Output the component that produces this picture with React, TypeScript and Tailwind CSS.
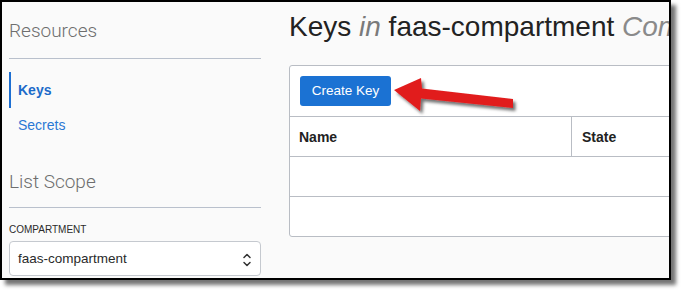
import React from "react";

export default function App() {
  const font = { fontFamily: '"Liberation Sans", Arial, sans-serif' };
  return (
    <div className="relative w-[681px] h-[290px] bg-white" style={font}>
      <div className="w-[671px] h-[280px] border-2 border-black bg-[#fafafa] overflow-hidden flex shadow-[5px_5px_4px_rgba(0,0,0,0.55)]">
        {/* Sidebar */}
        <div className="w-[252px] ml-[7px] shrink-0 flex flex-col">
          <div className="mt-[17px] h-[24px] leading-[24px] text-[19px] text-[#6e6e6e] font-light" style={{ fontFamily: 'Roboto, "Liberation Sans", sans-serif' }}>
            Resources
          </div>
          <div className="mt-[15px] border-t border-[#b9c0cc]" />
          <div className="mt-[13px] flex flex-col">
            <div className="h-[36px] flex items-center border-l-2 border-[#1d6fd2] pl-[7px] pt-[1px] text-[14px] font-bold text-[#1c6bc9]">
              Keys
            </div>
            <div className="h-[34px] flex items-center pl-[9px] text-[14px] text-[#2a78d4]">
              Secrets
            </div>
          </div>
          <div className="mt-[28px] h-[24px] leading-[24px] text-[19px] text-[#6e6e6e] font-light" style={{ fontFamily: 'Roboto, "Liberation Sans", sans-serif' }}>
            List Scope
          </div>
          <div className="mt-[13px] border-t border-[#b9c0cc]" />
          <div className="mt-[16px] h-[12px] leading-[12px] text-[10px] text-[#2b2b2b]">COMPARTMENT</div>
          <div className="mt-[5px] h-[35px] bg-white border border-[#c5c9cf] rounded-[4px] flex items-center justify-between pl-[8px] pr-[8px] pt-[2px] text-[13.5px] text-[#2a2a2a]">
            <span>faas-compartment</span>
            <svg width="10" height="16" viewBox="0 0 10 16" fill="none" stroke="#333" strokeWidth="1.5" strokeLinecap="round" strokeLinejoin="round">
              <path d="M2 5.5 L5 2.5 L8 5.5" />
              <path d="M2 10.5 L5 13.5 L8 10.5" />
            </svg>
          </div>
        </div>
        {/* Main */}
        <div className="ml-[28px] flex-1 min-w-0 flex flex-col">
          <div className="mt-[8px] h-[34px] leading-[34px] text-[28px] text-[#222] whitespace-nowrap">
            Keys <span className="italic text-[#7a7a7a]">in</span> faas-compartment <span className="italic text-[#8a8a8a]">Compartment</span>
          </div>
          <div className="mt-[21px] w-[440px] shrink-0 bg-white border border-[#b9bdc4] rounded-[3px]">
            <div className="h-[50px] pl-[10px] pt-[10px]">
              <div className="w-[91px] h-[30px] pt-[1px] bg-[#1b72d3] rounded-[3px] flex items-center justify-center text-white text-[13.5px]">
                Create Key
              </div>
            </div>
            <div className="border-t border-[#b9bdc4] h-[40px] flex text-[14px] font-bold text-[#222]">
              <div className="w-[282px] border-r border-[#b9bdc4] flex items-center pl-[9px] pt-[1px]">Name</div>
              <div className="flex items-center pl-[10px] pt-[1px]">State</div>
            </div>
            <div className="border-t border-[#b9bdc4] h-[40px]" />
            <div className="border-t border-[#b9bdc4] h-[40px]" />
          </div>
        </div>
      </div>
      {/* Red arrow annotation */}
      <svg className="absolute left-0 top-0 pointer-events-none" width="681" height="290" viewBox="0 0 681 290">
        <defs>
          <filter id="sh" x="-20%" y="-50%" width="140%" height="200%">
            <feDropShadow dx="2.5" dy="3" stdDeviation="1.8" floodColor="#000" floodOpacity="0.55" />
          </filter>
        </defs>
        <polygon
          points="394,90 421,78 422,88.5 513,99 513,108 421,98.5 420,111"
          fill="#e11d1f"
          filter="url(#sh)"
        />
      </svg>
    </div>
  );
}
